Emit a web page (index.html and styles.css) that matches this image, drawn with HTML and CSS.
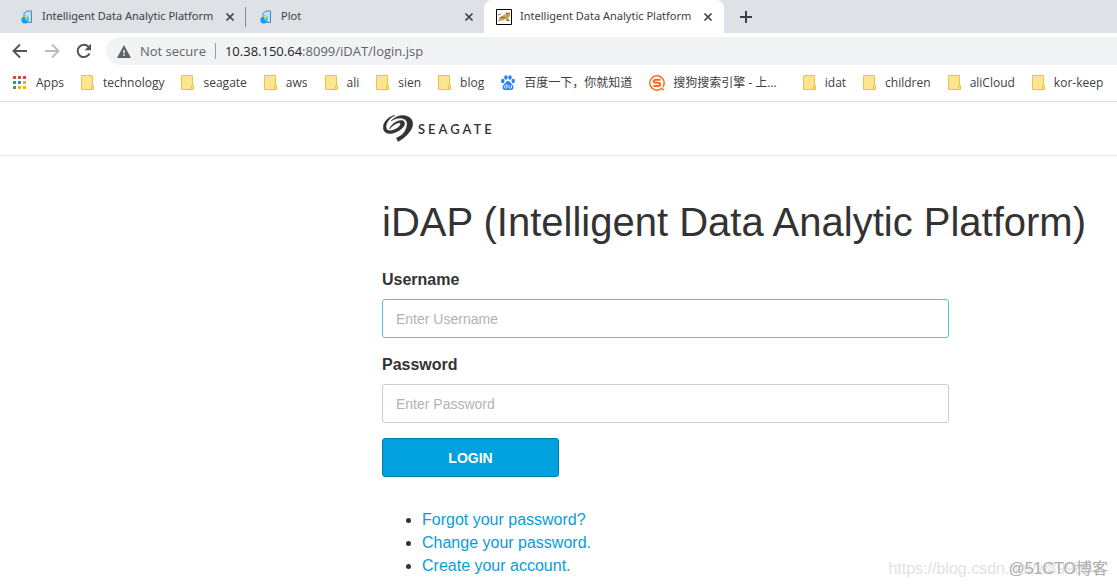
FILE: index.html
```html
<!DOCTYPE html>
<html lang="en">
<head>
<meta charset="utf-8">
<title>Intelligent Data Analytic Platform</title>
<link rel="stylesheet" href="styles.css">
</head>
<body>
<svg class="defs" width="0" height="0" aria-hidden="true">
  <symbol id="folder" viewBox="0 0 13 15"><path d="M.5.5h11v10h1v4H.5z" fill="#fee58f" stroke="#e6c54a"/><path d="M10.500 14v-3.500h1" fill="none" stroke="#e6c54a"/></symbol>
  <symbol id="close" viewBox="0 0 10 10"><path d="M1.500 1.500l7 7M8.500 1.500l-7 7" stroke="#3c4043" stroke-width="1.700"/></symbol>
  <symbol id="plot" viewBox="0 0 12 14"><path d="M3 3.500L6 1h4.500v11.500H7" fill="#c8ddf3" stroke="#3f8cd0"/><path d="M3 3v5" stroke="#4a90d0"/><circle cx="4" cy="10" r="3.600" fill="#159cf5"/><path d="M4 5l4 2-1 4-3-1z" fill="#45d4d0"/><path d="M3 6h3v3z" fill="#ffd83b"/></symbol>
</svg>
<nav class="tabs" aria-label="Tabs">
  <div class="tab tab-first"><svg class="fav"><use href="#plot"/></svg><span class="tab-title">Intelligent Data Analytic Platform</span><button class="close" aria-label="Close tab"><svg><use href="#close"/></svg></button></div>
  <div class="tab tab-second"><svg class="fav"><use href="#plot"/></svg><span class="tab-title">Plot</span><button class="close" aria-label="Close tab"><svg><use href="#close"/></svg></button></div>
  <div class="tab tab-active"><svg class="fav-cat" viewBox="0 0 16 16"><path d="M.5.5h15v15H.5z" fill="#fff" stroke="#000"/><path d="M2 12l2-4 4-2 2-1 0-2 2 1 2-1v4l-2 2 2 3h-2l-3-2-3 2H5l1-2-2 2z" fill="#c9a050"/><path d="M2 6l3-1M4 9l3-1 2 1M10 4l1 1 2-1M10 11l3 1" fill="none" stroke="#6b5a40" stroke-width=".8"/></svg><span class="tab-title">Intelligent Data Analytic Platform</span><button class="close" aria-label="Close tab"><svg><use href="#close"/></svg></button></div>
  <button class="new-tab" aria-label="New tab"><svg viewBox="0 0 12 12"><path d="M6 0v12M0 6h12" stroke="#3c4043" stroke-width="2"/></svg></button>
</nav>
<div class="toolbar">
  <button class="tool" aria-label="Back"><svg viewBox="0 0 16 16"><path d="M15 8H2M8 1.500L1.500 8 8 14.500" fill="none" stroke="#50555a" stroke-width="1.900"/></svg></button>
  <button class="tool" aria-label="Forward"><svg viewBox="0 0 16 16"><path d="M1 8h13M8 1.500L14.500 8 8 14.500" fill="none" stroke="#babcbe" stroke-width="1.900"/></svg></button>
  <button class="tool" aria-label="Reload"><svg viewBox="0 0 16 16"><path d="M13.500 10.500A6.200 6.200 0 1 1 12.500 3.700" fill="none" stroke="#50555a" stroke-width="2"/><path d="M15 .8v6.400H8.600z" fill="#50555a"/></svg></button>
  <div class="address">
    <svg class="warn" viewBox="0 0 14 13"><path d="M7 0l7 13H0z" fill="#5f6368"/><path d="M7 5v3.500M7 9.500V11" stroke="#f1f3f4" stroke-width="1.500"/></svg>
    <span class="insecure">Not secure</span>
    <span class="url"><span class="host">10.38.150.64</span>:8099/iDAT/login.jsp</span>
  </div>
</div>
<nav class="bookmarks" aria-label="Bookmarks">
  <a href="#"><svg class="bm-apps" viewBox="0 0 13 13"><path d="M0 0h3v3H0zM5 0h3v3H5zM10 0h3v3h-3z" fill="#ea4335"/><path d="M0 5h3v3H0zM0 10h3v3H0z" fill="#34a05a"/><path d="M5 5h3v3H5z" fill="#2685f5"/><path d="M10 5h3v3h-3zM5 10h3v3H5zM10 10h3v3h-3z" fill="#fbb30b"/></svg>Apps</a>
  <a href="#"><svg class="bm-folder"><use href="#folder"/></svg>technology</a>
  <a href="#"><svg class="bm-folder"><use href="#folder"/></svg>seagate</a>
  <a href="#"><svg class="bm-folder"><use href="#folder"/></svg>aws</a>
  <a href="#"><svg class="bm-folder"><use href="#folder"/></svg>ali</a>
  <a href="#"><svg class="bm-folder"><use href="#folder"/></svg>sien</a>
  <a href="#"><svg class="bm-folder"><use href="#folder"/></svg>blog</a>
  <a href="#" lang="zh-CN"><svg class="bm-baidu" viewBox="0 0 14 15"><g fill="#2680f8"><ellipse cx="1.800" cy="6" rx="1.700" ry="2.200"/><ellipse cx="4.900" cy="2.500" rx="1.700" ry="2.300"/><ellipse cx="9" cy="2.500" rx="1.700" ry="2.300"/><ellipse cx="12.200" cy="6" rx="1.700" ry="2.200"/><path d="M7 6c2 0 2.500 2 4 3.300 2 1.700 2 5.700-1 5.700H4c-3 0-3-4-1-5.700C4.500 8 5 6 7 6z"/></g><path d="M6 9v4H4.500a1.200 1.200 0 0 1 0-2.500H6M8 10v3h2.500v-3" fill="none" stroke="#fff" stroke-width=".8"/></svg>百度一下，你就知道</a>
  <a href="#" lang="zh-CN"><svg class="bm-sogou" viewBox="0 0 16 16"><circle cx="8" cy="8" r="7.200" fill="none" stroke="#fb6b1e" stroke-width="1.500"/><path d="M11.500 4.700H7c-3 0-3 3 0 3h2c3 0 3 3.300 0 3.300H4.500" fill="none" stroke="#fb6b1e" stroke-width="2"/><path d="M13 11l2 4" stroke="#fff"/><circle cx="14" cy="14.500" r="1" fill="#fb6b1e"/></svg>搜狗搜索引擎 - 上...</a>
  <a href="#" class="after-gap"><svg class="bm-folder"><use href="#folder"/></svg>idat</a>
  <a href="#"><svg class="bm-folder"><use href="#folder"/></svg>children</a>
  <a href="#"><svg class="bm-folder"><use href="#folder"/></svg>aliCloud</a>
  <a href="#"><svg class="bm-folder"><use href="#folder"/></svg>kor-keep</a>
</nav>
<header class="site-header">
  <svg class="swirl" viewBox="0 0 30 27"><g fill="#333" stroke="#333" stroke-width=".5"><path d="M12 .3C4 2 .3 8 .3 12.500 .3 18 6 20 12 17.500c6-2.500 10.500-6.500 9.500-10C20.500 4.500 16 5 12 7.500c-3 2-5 4.500-5.500 6.500 2-2.500 4-4 6.500-5.300 3-1.500 5-1 4.500.8-.8 2.500-4 4.500-7 5.500-4 1.500-7.500.5-7.500-3C3 7.500 6.500 3 12 .3z"/><path d="M8 6C13 1 19-.5 24 1.200c6 2 7.500 8.300 3.500 14.300-3 4.500-7.500 8.500-12.500 11l-1.500-3.500c5-2 8-5 9.500-9 2-5 1.500-8.500-2-10C17.500 2.300 13 3 8 6z"/></g></svg>
  <span class="brand">SEAGATE</span>
</header>
<main class="content">
  <h1>iDAP (Intelligent Data Analytic Platform)</h1>
  <form class="login">
    <label for="user">Username</label>
    <input class="field field-focus" id="user" type="text" placeholder="Enter Username">
    <label for="pass">Password</label>
    <input class="field" id="pass" type="password" placeholder="Enter Password">
    <button class="submit" type="submit">LOGIN</button>
  </form>
  <ul class="links">
    <li><a href="#">Forgot your password?</a></li>
    <li><a href="#">Change your password.</a></li>
    <li><a href="#">Create your account.</a></li>
  </ul>
</main>
<div class="mark mark-url">https://blog.csdn.net/w899803</div>
<div class="mark mark-blog">@51CTO博客</div>
</body>
</html>
```
FILE: styles.css
```css
* { box-sizing: border-box; }
body { margin: 0; background: #fff; color: #333; font: 16px/23px "Liberation Sans", Arial, sans-serif; }
button { border: 0; padding: 0; background: none; display: flex; align-items: center; justify-content: center; flex: none; }
svg { flex: none; display: block; }
a { text-decoration: none; }
.defs { position: absolute; }
.tabs, .toolbar, .bookmarks { font-family: "Open Sans", "Noto Sans CJK SC", sans-serif; white-space: nowrap; display: flex; align-items: center; }
.tabs { height: 33px; background: #dee1e6; font-family: "Noto Sans", sans-serif; font-size: 11px; color: #3c4043; }
.tab { display: flex; align-items: center; height: 32px; padding-right: 10px; }
.tab-title { flex: 1; padding-bottom: 2px; }
.tab-first { width: 245px; padding-left: 21px; }
.tab-second { width: 239px; padding-left: 14px; border-left: 1px solid #80868b; height: 20px; }
.tab-active { width: 240px; height: 33px; padding: 0 11px 0 12px; background: #fff; border-radius: 8px 8px 0 0; }
.fav { width: 12px; height: 14px; margin-right: 9px; }
.fav-cat { width: 16px; height: 16px; margin-right: 8px; }
.close, .close svg { width: 10px; height: 10px; }
.new-tab { margin-left: 16px; }
.new-tab svg { width: 12px; height: 12px; }
.toolbar { height: 32px; padding: 4px 0 0 12px; gap: 16px; }
.tool svg { width: 16px; height: 16px; }
.address { flex: 1; display: flex; align-items: center; height: 28px; margin-left: -2px; padding-left: 11px; background: #f1f3f4; border-radius: 14px 0 0 14px; font-size: 13px; color: #5f6368; }
.warn { width: 14px; height: 13px; margin-right: 9px; }
.insecure { padding-right: 9px; margin-right: 9px; border-right: 1px solid #9aa0a6; line-height: 16px; }
.host { color: #202124; }
.bookmarks { height: 37px; padding: 0 0 1px 13px; gap: 17px; border-bottom: 1px solid #dadce0; font-size: 12px; overflow: hidden; }
.bookmarks a { display: flex; align-items: center; color: #3c4043; }
.bm-apps { width: 13px; height: 13px; margin-right: 10px; }
.bm-folder { width: 13px; height: 15px; margin-right: 9px; }
.bm-baidu { width: 14px; height: 15px; margin-right: 9px; }
.bm-sogou { width: 16px; height: 16px; margin-right: 8px; }
.after-gap { margin-left: 9px; }
.site-header { height: 54px; padding-left: 383px; border-bottom: 1px solid #e5e5e5; display: flex; align-items: center; }
.swirl { width: 30px; height: 27px; }
.brand { margin-left: 5px; font: 600 13px/16px Lato, sans-serif; letter-spacing: 3px; }
.content { padding: 42px 0 0 382px; }
h1 { margin: 0 0 22px; font-size: 40px; line-height: 48px; font-weight: 400; white-space: nowrap; }
.login { display: flex; flex-direction: column; align-items: flex-start; max-width: 567px; }
label { font-weight: 700; margin-bottom: 8px; }
.field { width: 100%; height: 39px; padding: 0 13px; margin-bottom: 15px; border: 1px solid #ccc; border-radius: 3px; font: 14px/20px "Liberation Sans", Arial, sans-serif; color: #333; }
.field::placeholder { color: #b3b3b3; }
.field-focus { border-color: #5bc0e0; }
.submit { width: 177px; height: 39px; background: #00a1de; border: 1px solid #007dad; border-radius: 3px; color: #fff; font: 700 14px/20px "Liberation Sans", Arial, sans-serif; }
.links { margin: 31px 0 0; padding-left: 40px; }
.links a { color: #0a9bdc; }
.mark { position: absolute; pointer-events: none; line-height: 20px; white-space: nowrap; }
.mark-url { right: 16px; bottom: 8px; color: #e2e2e2; font-size: 16px; }
.mark-blog { right: 9px; bottom: 8px; color: #adadad; font: 16px/20px "Liberation Sans", "Noto Sans CJK SC", sans-serif; }
```
